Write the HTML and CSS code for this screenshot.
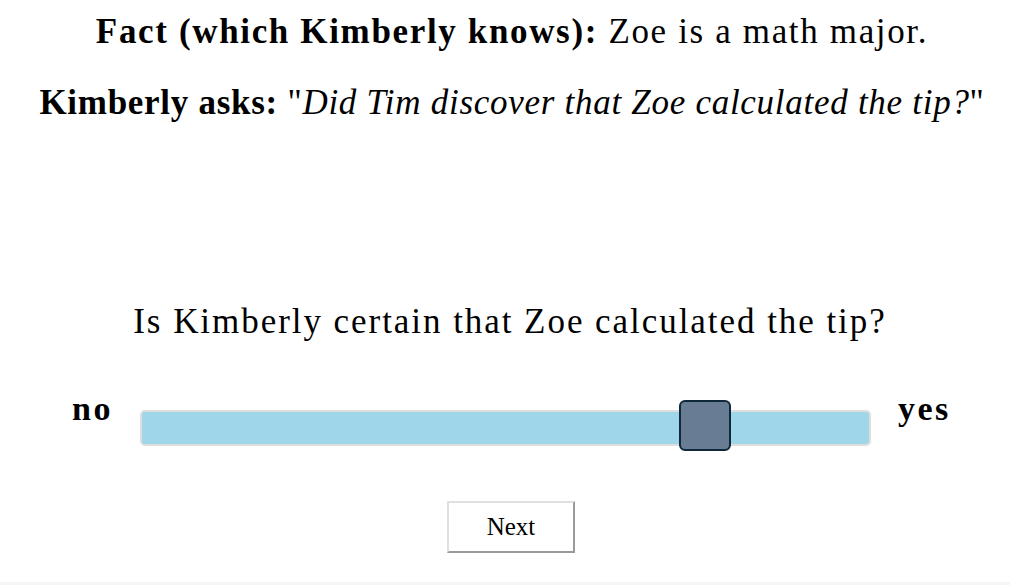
FILE: index.html
```html
<!DOCTYPE html>
<html>
<head>
<meta charset="utf-8">
<link rel="stylesheet" href="styles.css">
</head>
<body>
<div class="page">
  <p class="line fact"><b>Fact (which Kimberly knows):</b> Zoe is a math major.</p>
  <p class="line ask"><b>Kimberly asks:</b> "<i>Did Tim discover that Zoe calculated the tip?</i>"</p>
  <p class="question">Is Kimberly certain that Zoe calculated the tip?</p>
  <div class="slider-row">
    <span class="end no">no</span>
    <div class="track">
      <div class="handle"></div>
    </div>
    <span class="end yes">yes</span>
  </div>
  <div class="actions">
    <button class="next">Next</button>
  </div>
</div>
<div class="footer"></div>
</body>
</html>
```
FILE: styles.css
```css
html, body {
  margin: 0;
  padding: 0;
  background: #fff;
}
body {
  width: 1010px;
  height: 585px;
  overflow: hidden;
  font-family: "Liberation Serif", serif;
  color: #000;
  position: relative;
}
.page {
  display: flex;
  flex-direction: column;
  align-items: center;
}
.line {
  margin: 0;
  padding-left: 14px;
  font-size: 35px;
  line-height: 40px;
  text-align: center;
  white-space: nowrap;
}
.fact {
  margin-top: 12px;
  letter-spacing: 1.65px;
}
.ask {
  margin-top: 31px;
  letter-spacing: 0.72px;
}
.question {
  margin: 179px 0 0;
  padding-left: 10px;
  font-size: 35px;
  line-height: 40px;
  letter-spacing: 1.95px;
  white-space: nowrap;
}
.slider-row {
  margin-top: 56px;
  width: 100%;
  display: flex;
  align-items: flex-start;
}
.end {
  font-size: 34px;
  font-weight: bold;
  line-height: 22px;
  letter-spacing: 2.5px;
}
.no {
  margin-left: 72px;
  width: 68px;
}
.yes {
  margin-left: 27px;
}
.track {
  position: relative;
  margin-top: 12px;
  width: 727px;
  height: 32px;
  background: #9fd6ea;
  border: 2px solid #dedede;
  border-radius: 5px;
}
.handle {
  position: absolute;
  left: 537px;
  top: -12px;
  width: 48px;
  height: 47px;
  background: #687c93;
  border: 2px solid #10293a;
  border-radius: 6px;
}
.actions {
  margin-top: 55px;
  padding-left: 12px;
  display: flex;
  justify-content: center;
}
.next {
  width: 128px;
  height: 52px;
  background: #fff;
  border: 2px solid;
  border-color: #e0e0e0 #9a9a9a #9a9a9a #e0e0e0;
  font-family: "Liberation Serif", serif;
  font-size: 25px;
  color: #000;
  padding: 0;
}
.footer {
  position: absolute;
  left: 0;
  right: 0;
  bottom: 0;
  height: 3px;
  background: #f5f5f5;
}
```
